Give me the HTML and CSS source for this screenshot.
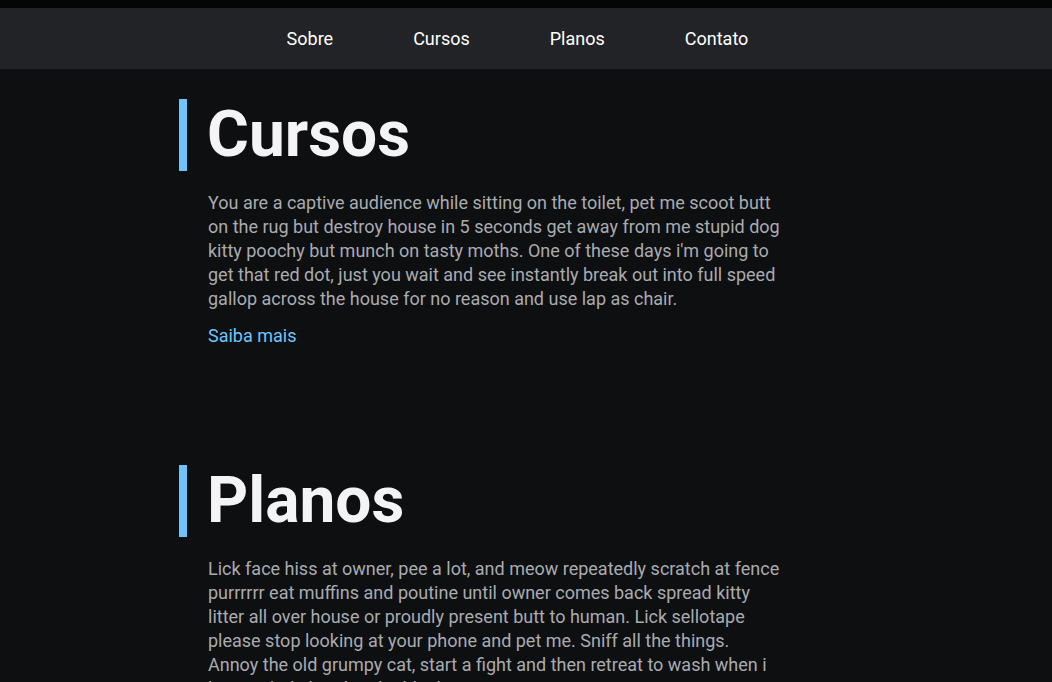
FILE: index.html
```html
<!DOCTYPE html>
<html lang="pt-BR">
<head>
  <meta charset="UTF-8">
  <meta name="viewport" content="width=device-width, initial-scale=1.0">
  <title>Cursos e Planos</title>
  <link rel="stylesheet" href="styles.css">
</head>
<body>
  <header class="topbar">
    <nav class="nav">
      <ul class="menu">
        <li><a href="#sobre">Sobre</a></li>
        <li><a href="#cursos">Cursos</a></li>
        <li><a href="#planos">Planos</a></li>
        <li><a href="#contato">Contato</a></li>
      </ul>
    </nav>
  </header>

  <main class="page">

    <!-- Cursos -->
    <section class="section" id="cursos">
      <h1 class="section-title">Cursos</h1>
      <p class="section-text">You are a captive audience while sitting on the toilet, pet me scoot butt on the rug but destroy house in 5 seconds get away from me stupid dog kitty poochy but munch on tasty moths. One of these days i'm going to get that red dot, just you wait and see instantly break out into full speed gallop across the house for no reason and use lap as chair.</p>
      <a class="more" href="#">Saiba mais</a>
    </section>

    <!-- Planos -->
    <section class="section" id="planos">
      <h1 class="section-title">Planos</h1>
      <p class="section-text">Lick face hiss at owner, pee a lot, and meow repeatedly scratch at fence purrrrrr eat muffins and poutine until owner comes back spread kitty litter all over house or proudly present butt to human. Lick sellotape please stop looking at your phone and pet me. Sniff all the things. Annoy the old grumpy cat, start a fight and then retreat to wash when i lose so hide head under blanket so no one can see.</p>
      <a class="more" href="#">Saiba mais</a>
    </section>

  </main>
</body>
</html>
```

FILE: styles.css
```css
* {
  margin: 0;
  padding: 0;
  box-sizing: border-box;
}

html {
  background-color: #050505;
}

body {
  margin-top: 8px;
  background-color: #0e0f11;
  font-family: Roboto, "Liberation Sans", sans-serif;
  min-height: 100vh;
}

/* Top menu */
.topbar {
  background-color: #222326;
  height: 61px;
  padding-right: 17px;
}

.nav {
  height: 100%;
}

.menu {
  list-style: none;
  display: flex;
  justify-content: center;
  align-items: center;
  gap: 80px;
  height: 100%;
}

.menu a {
  color: #ffffff;
  text-decoration: none;
  font-size: 18px;
}

/* Content */
.page {
  padding-right: 17px;
}

.section {
  width: 677px;
  margin: 0 auto;
  padding-top: 30px;
  padding-bottom: 87px;
}

.section-title {
  font-size: 64px;
  line-height: 72px;
  font-weight: 700;
  color: #f4f4f6;
  border-left: 8px solid #6ec3fb;
  padding-left: 20px;
  margin-bottom: 20px;
}

.section-text {
  margin-left: 29px;
  max-width: 576px;
  font-size: 18px;
  line-height: 24px;
  color: #a9abb0;
  margin-bottom: 13px;
}

.more {
  display: block;
  margin-left: 29px;
  font-size: 18px;
  line-height: 24px;
  color: #6ec6fb;
  text-decoration: none;
}
```
